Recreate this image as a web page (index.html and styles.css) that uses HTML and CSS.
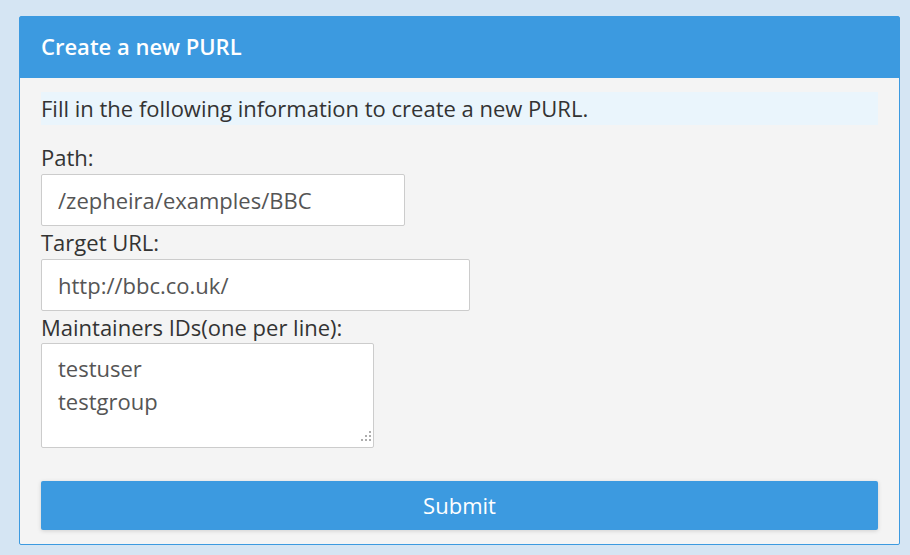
FILE: index.html
```html
<!DOCTYPE html>
<html>
<head>
<meta charset="utf-8">
<link rel="stylesheet" href="styles.css">
</head>
<body>
<div class="panel">
  <div class="panel-heading">Create a new PURL</div>
  <div class="panel-body">
    <div class="info">Fill in the following information to create a new PURL.</div>
    <form class="form">
      <label class="label" for="path">Path:</label>
      <input class="field field-path" id="path" type="text" value="/zepheira/examples/BBC">
      <label class="label" for="target">Target URL:</label>
      <input class="field field-target" id="target" type="text" value="http://bbc.co.uk/">
      <label class="label label-tight" for="maint">Maintainers IDs(one per line):</label>
      <div class="area-wrap">
        <textarea class="field field-area" id="maint">testuser
testgroup</textarea>
        <svg class="grip" width="10" height="10" viewBox="0 0 10 10" aria-hidden="true">
          <rect x="8" y="0" width="2" height="2"/>
          <rect x="4" y="4" width="2" height="2"/>
          <rect x="8" y="4" width="2" height="2"/>
          <rect x="0" y="8" width="2" height="2"/>
          <rect x="4" y="8" width="2" height="2"/>
          <rect x="8" y="8" width="2" height="2"/>
        </svg>
      </div>
      <button class="submit" type="button">Submit</button>
    </form>
  </div>
</div>
</body>
</html>
```
FILE: styles.css
```css
html, body {
  margin: 0;
  background: #d5e5f3;
}
body {
  padding: 16px 10px 10px 19px;
  font-family: "Open Sans", "Liberation Sans", sans-serif;
  font-size: 22px;
  color: #333;
}
.panel {
  border: 1px solid #3c9ae0;
  border-radius: 2px;
  background: #f4f4f4;
}
.panel-heading {
  background: #3c9ae0;
  color: #fff;
  font-weight: 600;
  height: 61px;
  line-height: 59px;
  padding: 0 21px;
}
.panel-body {
  padding: 14px 21px 14px 21px;
}
.info {
  background: #eaf5fc;
  height: 33px;
  line-height: 32px;
}
.form {
  display: flex;
  flex-direction: column;
  align-items: flex-start;
  margin-top: 16px;
}
.label {
  display: block;
  line-height: 33px;
  height: 33px;
}
.label-tight {
  height: 32px;
  line-height: 32px;
}
.field {
  box-sizing: border-box;
  font-family: "Open Sans", "Liberation Sans", sans-serif;
  font-size: 22px;
  color: #555;
  background: #fff;
  border: 1px solid #ccc;
  border-radius: 2px;
  padding: 0 16px;
  margin: 0;
  outline: none;
}
.field-path {
  width: 364px;
  height: 52px;
}
.field-target {
  width: 429px;
  height: 52px;
}
.area-wrap {
  position: relative;
  width: 333px;
  height: 105px;
}
.field-area {
  display: block;
  width: 333px;
  height: 105px;
  padding: 8px 16px;
  line-height: 33px;
  resize: none;
}
.grip {
  position: absolute;
  right: 3px;
  bottom: 7px;
  fill: #adadad;
}
.submit {
  align-self: stretch;
  margin-top: 33px;
  height: 49px;
  padding: 0 0 2px;
  border: 0;
  border-radius: 2px;
  background: #3c9ae0;
  color: #fff;
  font-family: "Open Sans", "Liberation Sans", sans-serif;
  font-size: 22px;
  box-shadow: 0 1px 4px rgba(0,0,0,0.15);
}
```
